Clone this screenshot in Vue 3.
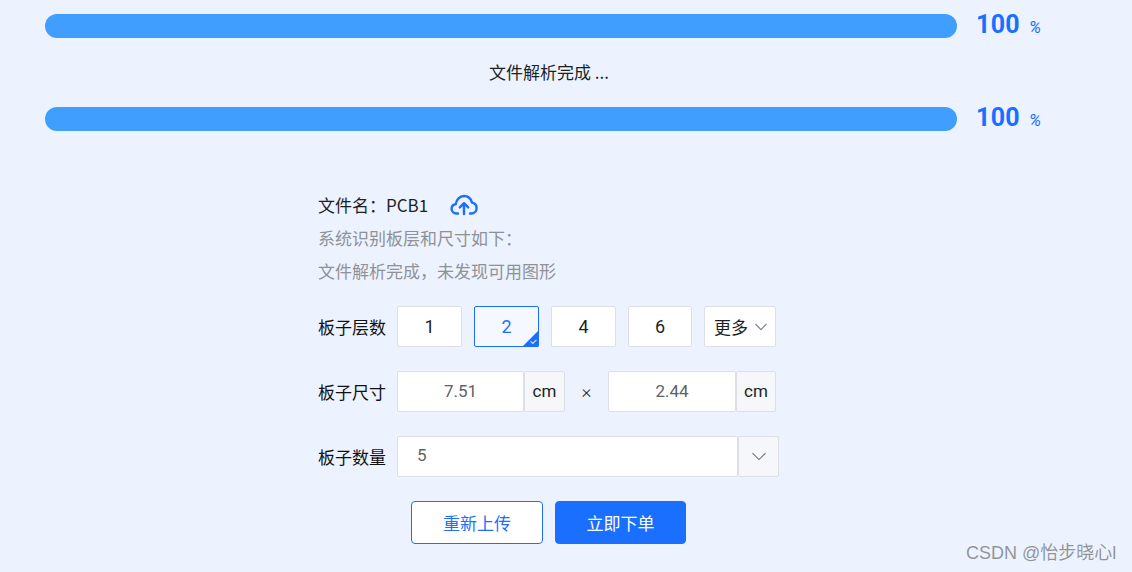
<script setup>
const layers = [
  { n: 1, active: false },
  { n: 2, active: true },
  { n: 4, active: false },
  { n: 6, active: false },
]
</script>

<template>
  <div class="page">
    <div class="progress">
      <div class="bar"></div>
      <div class="pct">100<span class="unit">%</span></div>
    </div>
    <div class="status">文件解析完成 ...</div>
    <div class="progress">
      <div class="bar"></div>
      <div class="pct">100<span class="unit">%</span></div>
    </div>

    <div class="form">
      <div class="info file">
        <span>文件名：PCB1</span>
        <svg class="cloud" width="28" height="22" viewBox="0 0 28 22" fill="none" stroke="#1a6fff" stroke-width="2.4" stroke-linecap="round" stroke-linejoin="round">
          <path d="M8 19.5H6.6C3.8 19.5 1.6 17.4 1.6 14.8C1.6 12.4 3.4 10.5 5.8 10.2C6.3 5.6 9.7 2 14 2C17.9 2 21 4.7 22 8.6C24.7 9.1 26.6 11.3 26.6 14C26.6 17 24.3 19.5 21.2 19.5H20" />
          <path d="M14 20V9.5M9.8 13.4L14 9.2L18.2 13.4" />
        </svg>
      </div>
      <div class="info muted one">系统识别板层和尺寸如下：</div>
      <div class="info muted two">文件解析完成，未发现可用图形</div>

      <div class="row layers">
        <span class="label">板子层数</span>
        <div class="options">
          <div v-for="l in layers" :key="l.n" class="opt" :class="{ active: l.active }">
            {{ l.n }}
            <span v-if="l.active" class="corner">
              <svg width="17" height="17" viewBox="0 0 17 17">
                <path d="M17 0V15a2 2 0 0 1-2 2H0Z" fill="#1a6fff" />
                <path d="M8.6 11.4L10.8 13.4L14.4 9.8" fill="none" stroke="#d8e6ff" stroke-width="1.2" />
              </svg>
            </span>
          </div>
          <div class="more">
            更多
            <svg width="14" height="8" viewBox="0 0 14 8" fill="none" stroke="#7a7f8a" stroke-width="1.1"><path d="M1.5 1L7 6.6L12.5 1" /></svg>
          </div>
        </div>
      </div>

      <div class="row">
        <span class="label">板子尺寸</span>
        <div class="size">
          <div class="field">7.51</div>
          <div class="addon">cm</div>
        </div>
        <span class="times">×</span>
        <div class="size second">
          <div class="field">2.44</div>
          <div class="addon">cm</div>
        </div>
      </div>

      <div class="row">
        <span class="label">板子数量</span>
        <div class="qty">
          <div class="qty-value">5</div>
          <div class="qty-arrow">
            <svg width="16" height="9" viewBox="0 0 16 9" fill="none" stroke="#6f7480" stroke-width="1.1"><path d="M1.5 1.2L8 7.6L14.5 1.2" /></svg>
          </div>
        </div>
      </div>

      <div class="actions">
        <button class="btn ghost" type="button">重新上传</button>
        <button class="btn primary" type="button">立即下单</button>
      </div>
    </div>

    <div class="watermark">CSDN @怡步晓心l</div>
  </div>
</template>

<style>
html, body { margin: 0; padding: 0; background: #ecf3ff; }
</style>

<style scoped>
.page {
  position: relative;
  width: 1132px;
  height: 572px;
  overflow: hidden;
  box-sizing: border-box;
  padding: 14px 0 0 45px;
  background: #ecf3ff;
  font-family: "Noto Sans CJK SC", "Noto Sans", sans-serif;
  font-size: 17px;
  color: #1c1f26;
}
.progress {
  display: flex;
  align-items: center;
  height: 24px;
}
.bar {
  width: 912px;
  height: 24px;
  border-radius: 12px;
  background: #409eff;
}
.pct {
  margin-left: 19px;
  font-family: Roboto, "Liberation Sans", sans-serif;
  font-size: 25px;
  font-weight: 700;
  color: #1a6fff;
  line-height: 24px;
  letter-spacing: 0.3px;
}
.unit {
  margin-left: 9px;
  font-size: 17px;
  font-weight: 400;
  font-style: italic;
  letter-spacing: 0;
}
.status {
  height: 69px;
  width: 1008px;
  line-height: 67px;
  text-align: center;
}
.form {
  margin: 62px 0 0 273px;
  width: 480px;
}
.info {
  height: 24px;
  line-height: 24px;
}
.file {
  display: flex;
  align-items: center;
  gap: 22px;
}
.muted { color: #8f9196; }
.one { margin-top: 9px; }
.two { margin-top: 9px; }
.row {
  display: flex;
  align-items: center;
  height: 41px;
  margin-top: 24px;
}
.layers { margin-top: 23px; }
.label {
  width: 79px;
  flex: none;
  color: #111;
}
.options {
  display: flex;
  gap: 12px;
}
.opt {
  position: relative;
  box-sizing: border-box;
  width: 65px;
  height: 41px;
  line-height: 39px;
  text-align: center;
  background: #fff;
  border: 1px solid #dcdfe6;
  border-radius: 2px;
  font-family: Roboto, sans-serif;
  font-size: 18px;
}
.opt:nth-child(4) { width: 64px; }
.opt.active {
  border-color: #1a6fff;
  color: #1a6fff;
  background: #f5f9ff;
}
.corner {
  position: absolute;
  right: -1px;
  bottom: -1px;
  width: 17px;
  height: 17px;
  display: block;
}
.corner svg { display: block; }
.more {
  box-sizing: border-box;
  width: 72px;
  height: 41px;
  display: flex;
  align-items: center;
  justify-content: center;
  gap: 6px;
  background: #fff;
  border: 1px solid #dcdfe6;
  border-radius: 2px;
  padding-left: 2px;
}
.size { display: flex; }
.field {
  box-sizing: border-box;
  width: 127px;
  height: 41px;
  line-height: 39px;
  text-align: center;
  background: #fff;
  border: 1px solid #dcdfe6;
  border-radius: 2px;
  font-family: Roboto, sans-serif;
  font-size: 17px;
  color: #606266;
}
.addon {
  box-sizing: border-box;
  width: 41px;
  height: 41px;
  line-height: 39px;
  text-align: center;
  background: #f5f7fa;
  border: 1px solid #dcdfe6;
  border-radius: 2px;
  font-family: Roboto, sans-serif;
  font-size: 17px;
}
.second .field { width: 128px; }
.second .addon { width: 40px; }
.times {
  width: 43px;
  text-align: center;
  font-family: Roboto, sans-serif;
  font-size: 19px;
  font-weight: 300;
}
.qty { display: flex; }
.qty-value {
  box-sizing: border-box;
  width: 341px;
  height: 41px;
  line-height: 37px;
  padding-left: 19px;
  background: #fff;
  border: 1px solid #dcdfe6;
  border-radius: 2px;
  font-family: Roboto, sans-serif;
  color: #606266;
}
.qty-arrow {
  box-sizing: border-box;
  width: 41px;
  height: 41px;
  display: flex;
  align-items: center;
  justify-content: center;
  background: #f5f7fa;
  border: 1px solid #dcdfe6;
  border-radius: 2px;
}
.actions {
  display: flex;
  gap: 12px;
  margin: 24px 0 0 93px;
}
.btn {
  box-sizing: border-box;
  height: 43px;
  padding: 0;
  border-radius: 4px;
  font-family: "Noto Sans CJK SC", sans-serif;
  font-size: 17px;
}
.ghost {
  width: 132px;
  background: #fff;
  border: 1px solid #1a6fff;
  color: #1a6fff;
}
.primary {
  width: 131px;
  background: #1a6fff;
  border: 1px solid #1a6fff;
  color: #fff;
}
.watermark {
  position: absolute;
  left: 966px;
  top: 542px;
  font-family: "Liberation Sans", "Noto Sans CJK SC", sans-serif;
  font-size: 18px;
  line-height: 22px;
  color: rgba(110, 110, 110, 0.72);
  white-space: nowrap;
}
</style>
